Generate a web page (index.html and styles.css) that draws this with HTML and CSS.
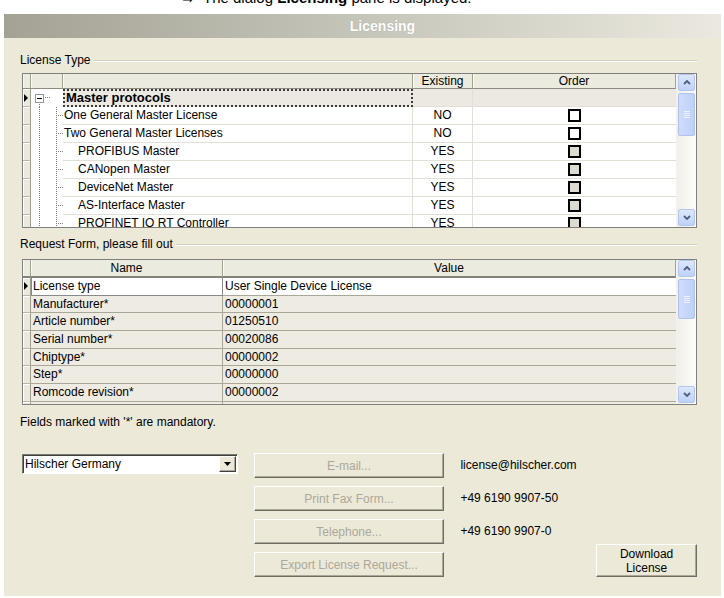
FILE: index.html
```html
<!DOCTYPE html>
<html>
<head>
<meta charset="utf-8">
<title>Licensing</title>
<link rel="stylesheet" href="styles.css">
</head>
<body>
<div class="caption"><div class="caption-text"><span class="arrow">→</span>The dialog <b>Licensing</b> pane is displayed.</div></div>
<div class="dialog">
  <div class="titlebar"><span class="title">Licensing</span></div>
  <div class="content">
    <div class="group-label"><span>License Type</span><div class="etch"></div></div>
    <div class="grid grid1">
      <div class="grid-body">
        <div class="g1-row g1-head">
          <div class="hc hc-rh"></div><div class="hc"></div><div class="hc"></div><div class="hc">Existing</div><div class="hc">Order</div>
        </div>
        <div class="g1-row sel">
          <div class="rh"><span class="tri"></span></div>
          <div class="tree tree-root"><span class="expander"><span class="minus"></span></span></div>
          <div class="nm bold focus">Master protocols</div>
          <div class="ex"></div><div class="od"></div>
        </div>
        <div class="g1-row">
          <div class="rh"></div><div class="tree tree-child"></div>
          <div class="nm">One General Master License</div>
          <div class="ex">NO</div><div class="od"><span class="cb"></span></div>
        </div>
        <div class="g1-row">
          <div class="rh"></div><div class="tree tree-child"></div>
          <div class="nm">Two General Master Licenses</div>
          <div class="ex">NO</div><div class="od"><span class="cb"></span></div>
        </div>
        <div class="g1-row">
          <div class="rh"></div><div class="tree tree-child"></div>
          <div class="nm lvl2">PROFIBUS Master</div>
          <div class="ex">YES</div><div class="od"><span class="cb on"></span></div>
        </div>
        <div class="g1-row">
          <div class="rh"></div><div class="tree tree-child"></div>
          <div class="nm lvl2">CANopen Master</div>
          <div class="ex">YES</div><div class="od"><span class="cb on"></span></div>
        </div>
        <div class="g1-row">
          <div class="rh"></div><div class="tree tree-child"></div>
          <div class="nm lvl2">DeviceNet Master</div>
          <div class="ex">YES</div><div class="od"><span class="cb on"></span></div>
        </div>
        <div class="g1-row">
          <div class="rh"></div><div class="tree tree-child"></div>
          <div class="nm lvl2">AS-Interface Master</div>
          <div class="ex">YES</div><div class="od"><span class="cb on"></span></div>
        </div>
        <div class="g1-row">
          <div class="rh"></div><div class="tree tree-child"></div>
          <div class="nm lvl2">PROFINET IO RT Controller</div>
          <div class="ex">YES</div><div class="od"><span class="cb on"></span></div>
        </div>
      </div>
      <div class="vscroll">
        <div class="sb-btn"><svg width="8" height="5" viewBox="0 0 8 5"><path d="M1 4 L4 1 L7 4" fill="none" stroke="#4d6185" stroke-width="1.8"/></svg></div>
        <div class="sb-thumb thumb1"><span class="grip"></span></div>
        <div class="sb-fill"></div>
        <div class="sb-btn"><svg width="8" height="5" viewBox="0 0 8 5"><path d="M1 1 L4 4 L7 1" fill="none" stroke="#4d6185" stroke-width="1.8"/></svg></div>
      </div>
    </div>

    <div class="group-label gl2"><span>Request Form, please fill out</span><div class="etch"></div></div>
    <div class="grid grid2">
      <div class="grid-body">
        <div class="g2-row g2-head">
          <div class="hc hc-rh"></div><div class="hc">Name</div><div class="hc">Value</div>
        </div>
        <div class="g2-row first">
          <div class="rh"><span class="tri"></span></div>
          <div class="n2 edit">License type</div>
          <div class="v2">User Single Device License</div>
        </div>
        <div class="g2-row"><div class="rh"></div><div class="n2">Manufacturer*</div><div class="v2">00000001</div></div>
        <div class="g2-row"><div class="rh"></div><div class="n2">Article number*</div><div class="v2">01250510</div></div>
        <div class="g2-row"><div class="rh"></div><div class="n2">Serial number*</div><div class="v2">00020086</div></div>
        <div class="g2-row"><div class="rh"></div><div class="n2">Chiptype*</div><div class="v2">00000002</div></div>
        <div class="g2-row"><div class="rh"></div><div class="n2">Step*</div><div class="v2">00000000</div></div>
        <div class="g2-row"><div class="rh"></div><div class="n2">Romcode revision*</div><div class="v2">00000002</div></div>
        <div class="g2-row"><div class="rh"></div><div class="n2"></div><div class="v2"></div></div>
      </div>
      <div class="vscroll">
        <div class="sb-btn"><svg width="8" height="5" viewBox="0 0 8 5"><path d="M1 4 L4 1 L7 4" fill="none" stroke="#4d6185" stroke-width="1.8"/></svg></div>
        <div class="sb-thumb thumb2"><span class="grip"></span></div>
        <div class="sb-fill"></div>
        <div class="sb-btn"><svg width="8" height="5" viewBox="0 0 8 5"><path d="M1 1 L4 4 L7 1" fill="none" stroke="#4d6185" stroke-width="1.8"/></svg></div>
      </div>
    </div>

    <div class="note">Fields marked with '*' are mandatory.</div>

    <div class="bottom">
      <div class="combo">
        <span class="combo-text">Hilscher Germany</span>
        <span class="combo-btn"><svg width="7" height="4" viewBox="0 0 7 4"><path d="M0 0 H7 L3.5 4 Z" fill="#000"/></svg></span>
      </div>
      <div class="btn-col">
        <div class="btn disabled">E-mail...</div>
        <div class="btn disabled">Print Fax Form...</div>
        <div class="btn disabled">Telephone...</div>
        <div class="btn disabled">Export License Request...</div>
      </div>
      <div class="contacts">
        <div class="contact">license@hilscher.com</div>
        <div class="contact">+49 6190 9907-50</div>
        <div class="contact">+49 6190 9907-0</div>
      </div>
      <div class="btn download">Download<br>License</div>
    </div>
  </div>
</div>
</body>
</html>
```

FILE: styles.css
```css
* { box-sizing: border-box; }
html, body { margin: 0; padding: 0; background: #fff; }
body {
  font-family: "Liberation Sans", Arial, sans-serif;
  font-size: 12px;
  color: #000;
  width: 724px;
  height: 598px;
  overflow: hidden;
}

.caption { height: 14px; overflow: hidden; }
.caption-text {
  margin-top: -10px;
  margin-left: 180px;
  font: 15px/16px "Liberation Sans", Arial, sans-serif;
  white-space: nowrap;
}
.arrow { margin-right: 8px; }

.dialog {
  margin-left: 4px;
  width: 717px;
  height: 582px;
  background: #ece9d8;
}
.titlebar {
  height: 24px;
  background: linear-gradient(to right, #a3a294, #c6c5ba 50%, #ebe9df);
  display: flex;
  align-items: center;
  justify-content: center;
  padding-left: 40px;
}
.title {
  color: #fff;
  font-weight: bold;
  font-size: 14px;
  text-shadow: 0 0 1px rgba(0,0,0,0.2);
}

.content { padding: 0 24px 0 16px; }

.group-label {
  display: flex;
  align-items: center;
  height: 14px;
  margin-top: 15px;
  line-height: 14px;
}
.group-label span { padding-right: 3px; white-space: nowrap; }
.gl2 { margin-top: 9px; }
.etch {
  flex: 1;
  height: 2px;
  border-top: 1px solid #d0d0bf;
  border-bottom: 1px solid #fff;
  margin-top: 1px;
}

.grid {
  margin-left: 2px;
  border: 1px solid #7f7f7f;
  display: flex;
  background: #fff;
  overflow: hidden;
}
.grid1 { margin-top: 6px; height: 155px; }
.grid2 { margin-top: 8px; height: 146px; }
.grid-body { flex: 1; overflow: hidden; }

.g1-row {
  display: grid;
  grid-template-columns: 8px 32px 350px 60px 203px;
  height: 18px;
}
.g1-head { height: 15px; }
.g2-row {
  display: grid;
  grid-template-columns: 8px 192px 453px;
  height: 17.7px;
}
.g2-head { height: 18px; }

.hc {
  background: #ecebe0;
  border-right: 1px solid #a3a190;
  border-bottom: 1px solid #8e8c80;
  box-shadow: inset 1px 0 #fbfaf5;
  text-align: center;
  line-height: 14px;
  white-space: nowrap;
}
.g2-head .hc { border-bottom: 2px solid #85837a; line-height: 16px; }

.rh {
  background: #ebe9de;
  border-right: 1px solid #9f9d8e;
  border-bottom: 1px solid #b9b6a6;
  box-shadow: inset 1px 1px #fff;
  display: flex;
  align-items: center;
  padding-left: 1px;
}
.tri {
  width: 0; height: 0;
  border-left: 4px solid #000;
  border-top: 4px solid transparent;
  border-bottom: 4px solid transparent;
}

.tree { background-color: #fff; }
.tree-root {
  display: flex;
  align-items: center;
  padding-left: 4px;
  background:
    repeating-linear-gradient(to bottom, #7a7a7a 0 1px, transparent 1px 2px) 8px 13px / 1px 5px no-repeat,
    repeating-linear-gradient(to right, #7a7a7a 0 1px, transparent 1px 2px) 14px 8px / 6px 1px no-repeat,
    #fff;
}
.expander {
  width: 9px; height: 9px;
  border: 1px solid #8c95a0;
  background: #fff;
  display: flex;
  align-items: center;
  justify-content: center;
}
.minus { width: 5px; height: 1px; background: #000; }
.tree-child {
  background:
    repeating-linear-gradient(to bottom, #7a7a7a 0 1px, transparent 1px 2px) 8px 0 / 1px 100% no-repeat,
    repeating-linear-gradient(to bottom, #7a7a7a 0 1px, transparent 1px 2px) 25px 0 / 1px 100% no-repeat,
    repeating-linear-gradient(to right, #7a7a7a 0 1px, transparent 1px 2px) 27px 8px / 5px 1px no-repeat,
    #fff;
}

.nm, .ex, .od {
  border-bottom: 1px solid #e2e0d6;
  line-height: 17px;
  white-space: nowrap;
  overflow: hidden;
}
.nm { padding-left: 1px; border-right: 1px solid #e2e0d6; }
.nm.lvl2 { padding-left: 15px; }
.ex { text-align: center; border-right: 1px solid #e2e0d6; }
.od { display: flex; align-items: center; justify-content: center; }
.bold { font-weight: bold; font-size: 13px; }
.sel .nm, .sel .ex, .sel .od { background: #ebe9e1; }
.sel .focus { border: 2px dotted #3a3a3a; line-height: 14px; }

.cb {
  width: 13px; height: 13px;
  border: 2px solid #000;
  background: #fff;
}
.cb.on { background: #dcdad1; }

.n2, .v2 {
  background: #eeebe3;
  border-right: 1px solid #a9a797;
  border-bottom: 1px solid #a9a797;
  padding-left: 2px;
  line-height: 16.7px;
  white-space: nowrap;
  overflow: hidden;
}
.v2 { border-right: none; }
.first .n2, .first .v2 { background: #fff; }
.first .n2.edit { border: 1px solid #8a8a8a; border-top: none; padding-left: 1px; }

.vscroll {
  width: 20px;
  display: flex;
  flex-direction: column;
  padding: 0 1px 1px 1px;
  background: linear-gradient(to right, #f1efe8, #fdfdfb);
  border-left: 1px solid #f3f2ec;
}
.sb-btn {
  height: 17px;
  flex: none;
  border: 1px solid #b3c6f1;
  border-radius: 2px;
  background: linear-gradient(#dde8fe, #bed1f8);
  display: flex;
  align-items: center;
  justify-content: center;
}
.sb-thumb {
  margin-top: 2px;
  flex: none;
  border: 1px solid #b0c3ee;
  border-radius: 2px;
  background: linear-gradient(to right, #cfdcfc, #bed0f8);
  display: flex;
  align-items: center;
  justify-content: center;
}
.thumb1 { height: 43px; }
.thumb2 { height: 40px; }
.grip {
  width: 6px; height: 7px;
  background: repeating-linear-gradient(to bottom, #eef3fe 0 1px, transparent 1px 2px);
}
.sb-fill { flex: 1; }

.note {
  margin-top: 10px;
  height: 14px;
  line-height: 14px;
}

.bottom {
  margin-top: 24px;
  margin-left: 2px;
  display: flex;
  align-items: flex-start;
}
.combo {
  width: 216px;
  height: 20px;
  margin-top: 1px;
  display: flex;
  align-items: center;
  background: #fff;
  border: 1px solid;
  border-color: #7b7a70 #fff #fff #7b7a70;
  box-shadow: inset 1px 1px #404040;
}
.combo-text { flex: 1; padding-left: 2px; line-height: 18px; }
.combo-btn {
  width: 17px;
  height: 16px;
  margin-right: 1px;
  background: #ece9d8;
  border: 1px solid;
  border-color: #fff #404040 #404040 #fff;
  box-shadow: inset -1px -1px #aca899;
  display: flex;
  align-items: center;
  justify-content: center;
}
.btn-col {
  margin-left: 16px;
  width: 191px;
  display: flex;
  flex-direction: column;
  gap: 8px;
}
.btn {
  height: 25px;
  background: #ece9d8;
  border: 1px solid;
  border-color: #fff #6f6d62 #6f6d62 #fff;
  box-shadow: inset -1px -1px #aca899;
  display: flex;
  align-items: center;
  justify-content: center;
  text-align: center;
  white-space: nowrap;
}
.btn.disabled { color: #aca899; }
.contacts {
  margin-left: 16px;
  width: 136px;
  display: flex;
  flex-direction: column;
  gap: 8px;
}
.contact { height: 25px; line-height: 25px; white-space: nowrap; }
.download {
  width: 101px;
  height: 33px;
  margin-top: 91px;
  line-height: 14px;
}
```
